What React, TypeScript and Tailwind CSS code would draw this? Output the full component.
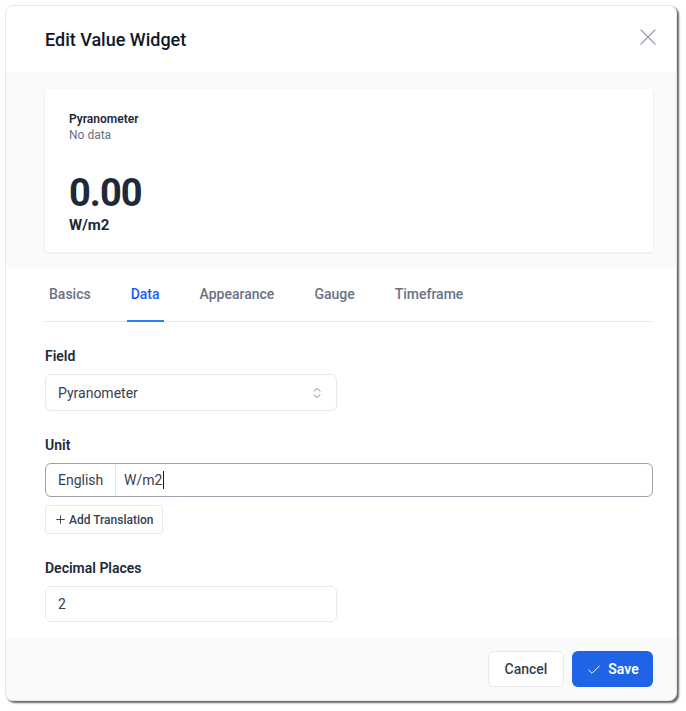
import { Check, ChevronsUpDown, Plus } from "lucide-react";

const tabs = ["Basics", "Data", "Appearance", "Gauge", "Timeframe"];

const Label = ({ children }: { children: string }) => (
  <div className="text-sm font-semibold leading-5 text-gray-800">{children}</div>
);

const App = () => {
  return (
    <div
      className="h-[711px] w-[686px] bg-white pl-[5px] pt-[5px]"
      style={{ fontFamily: "Roboto, 'Noto Sans', sans-serif" }}
    >
      <div className="flex h-[696px] w-[672px] flex-col overflow-hidden rounded-lg border border-gray-200 bg-white shadow-[2px_2px_2px_rgba(0,0,0,0.6)]">
        {/* header */}
        <div className="flex h-[66px] items-center justify-between pl-[39px] pr-[20px]">
          <h2 className="text-[18px] font-medium text-gray-900">Edit Value Widget</h2>
          <svg width="16" height="16" viewBox="0 0 16 16" className="mb-1 text-gray-400">
            <path d="M1 1L15 15M15 1L1 15" stroke="currentColor" strokeWidth="1.25" strokeLinecap="round" />
          </svg>
        </div>

        {/* preview */}
        <div className="bg-gray-50 pb-4 pl-[39px] pr-[23px] pt-[17px]">
          <div className="h-[163px] rounded-sm bg-white px-6 pt-[22px] shadow-[0_1px_3px_rgba(0,0,0,0.08)]">
            <div className="text-xs font-semibold leading-4 text-gray-800">Pyranometer</div>
            <div className="text-xs leading-4 text-gray-500">No data</div>
            <div className="mt-[31px] text-[38px] font-bold leading-none tracking-tight text-gray-800">0.00</div>
            <div className="mt-[3px] text-[15px] font-bold leading-5 text-gray-800">W/m2</div>
          </div>
        </div>

        {/* form */}
        <div className="flex-1 pl-[39px] pr-[23px]">
          <div className="flex gap-8 border-b border-gray-200">
            {tabs.map((t) =>
              t === "Data" ? (
                <div key={t} className="-mb-px border-b-2 border-blue-500 px-1 py-4 text-sm font-medium leading-5 text-blue-600">
                  {t}
                </div>
              ) : (
                <div key={t} className="-mb-px border-b-2 border-transparent px-1 py-4 text-sm font-medium leading-5 text-gray-500">
                  {t}
                </div>
              )
            )}
          </div>

          <div className="mt-6">
            <Label>Field</Label>
            <div className="mt-2 flex h-[37px] w-[292px] items-center justify-between rounded-md border border-gray-200 bg-white pl-3 pr-3 text-sm text-gray-700">
              <span>Pyranometer</span>
              <ChevronsUpDown size={14} strokeWidth={1.5} className="text-gray-500" />
            </div>
          </div>

          <div className="mt-6">
            <Label>Unit</Label>
            <div className="mt-2 flex h-[34px] items-stretch rounded-md border border-gray-400 bg-white text-sm text-gray-700">
              <div className="flex w-[70px] items-center border-r border-gray-200 pl-3">English</div>
              <div className="flex items-center pl-2">
                W/m2<span className="ml-px h-[18px] w-px bg-gray-900" />
              </div>
            </div>
            <button className="mt-2 flex h-[29px] items-center gap-0.5 rounded border border-gray-200 bg-white px-2 text-xs font-medium text-gray-700">
              <Plus size={13} strokeWidth={1.75} />
              Add Translation
            </button>
          </div>

          <div className="mt-6">
            <Label>Decimal Places</Label>
            <div className="mt-2 flex h-[36px] w-[292px] items-center rounded-md border border-gray-200 bg-white pl-3 text-sm text-gray-700">
              2
            </div>
          </div>
        </div>

        {/* footer */}
        <div className="flex h-[62px] items-center justify-end gap-2 bg-gray-50 pr-[23px]">
          <button className="h-9 w-[76px] rounded-md border border-gray-200 bg-white text-sm font-medium text-gray-700">
            Cancel
          </button>
          <button className="flex h-9 w-[81px] items-center justify-center gap-1.5 rounded-md bg-[#1f63e6] text-sm font-semibold text-white">
            <Check size={16} strokeWidth={1.5} className="mt-0.5" />
            Save
          </button>
        </div>
      </div>
    </div>
  );
};

export default App;
